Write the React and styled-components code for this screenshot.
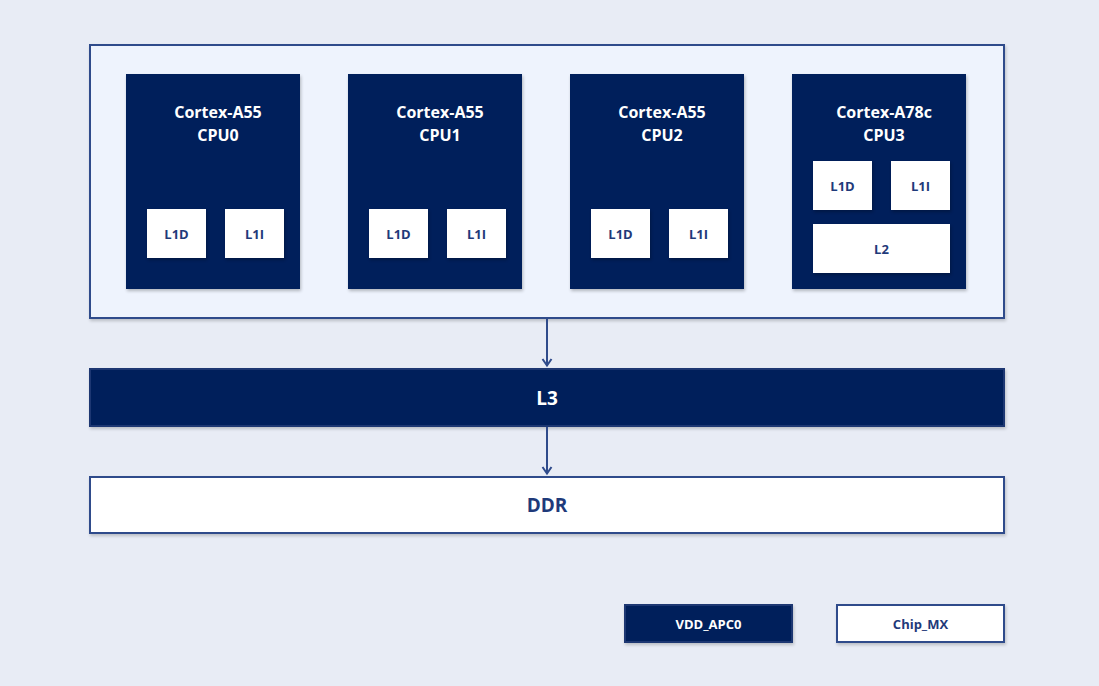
import styled, { createGlobalStyle } from "styled-components";

const GlobalStyle = createGlobalStyle`
  html, body {
    margin: 0;
    padding: 0;
    background: #e8ecf5;
  }
  body {
    font-family: "Open Sans", "Liberation Sans", sans-serif;
  }
`;

const Page = styled.div`
  width: 1099px;
  height: 686px;
  box-sizing: border-box;
  padding: 44px 94px 0 89px;
  display: flex;
  flex-direction: column;
`;

const Cluster = styled.div`
  height: 275px;
  box-sizing: border-box;
  border: 2px solid #2f4b8b;
  background: #eef3fd;
  box-shadow: 1px 2px 3px rgba(0, 0, 0, 0.2);
  padding: 28px 0 0 35px;
  display: flex;
  gap: 48px;
`;

const Cpu = styled.div`
  width: 174px;
  height: 215px;
  box-sizing: border-box;
  background: #001f5b;
  box-shadow: 1px 2px 3px rgba(0, 0, 0, 0.25);
  padding: 27px 16px ${(p) => p.$bottom}px 21px;
  display: flex;
  flex-direction: column;
`;

const CpuTitle = styled.div`
  color: #ffffff;
  font-weight: 700;
  font-size: 16px;
  line-height: 23px;
  text-align: center;
  margin-left: 5px;
`;

const Caches = styled.div`
  margin-top: auto;
  display: grid;
  grid-template-columns: 1fr 1fr;
  column-gap: 19px;
  row-gap: 14px;
`;

const Cache = styled.div`
  grid-column: ${(p) => (p.$wide ? "1 / span 2" : "auto")};
  height: 49px;
  background: #ffffff;
  box-shadow: 1px 2px 3px rgba(0, 0, 0, 0.25);
  display: flex;
  align-items: center;
  justify-content: center;
  color: #1f3a7a;
  font-weight: 700;
  font-size: 13px;
`;

const Connector = styled.div`
  height: 49px;
  display: flex;
  justify-content: center;
`;

const Bar = styled.div`
  height: ${(p) => p.$h}px;
  box-sizing: border-box;
  border: 2px solid ${(p) => (p.$dark ? "#1d3772" : "#2f4b8b")};
  background: ${(p) => (p.$dark ? "#001f5b" : "#ffffff")};
  color: ${(p) => (p.$dark ? "#ffffff" : "#1f3a7a")};
  box-shadow: 1px 2px 3px rgba(0, 0, 0, 0.2);
  display: flex;
  align-items: center;
  justify-content: center;
  font-weight: 700;
  font-size: 19px;
`;

const Legend = styled.div`
  margin-top: 70px;
  display: flex;
  justify-content: flex-end;
  gap: 43px;
`;

const Key = styled.div`
  width: 169px;
  height: 39px;
  box-sizing: border-box;
  border: 2px solid ${(p) => (p.$dark ? "#1d3772" : "#2f4b8b")};
  background: ${(p) => (p.$dark ? "#001f5b" : "#ffffff")};
  color: ${(p) => (p.$dark ? "#ffffff" : "#1f3a7a")};
  box-shadow: 1px 2px 3px rgba(0, 0, 0, 0.2);
  display: flex;
  align-items: center;
  justify-content: center;
  font-weight: 700;
  font-size: 13px;
`;

function Arrow() {
  return (
    <svg width="16" height="49" viewBox="0 0 16 49">
      <path d="M8 0 V47" stroke="#2f4b8b" strokeWidth="2" fill="none" />
      <path d="M3.5 40 L8 46.5 L12.5 40" stroke="#2f4b8b" strokeWidth="2" fill="none" />
    </svg>
  );
}

const cpus = [
  { core: "Cortex-A55", name: "CPU0" },
  { core: "Cortex-A55", name: "CPU1" },
  { core: "Cortex-A55", name: "CPU2" },
  { core: "Cortex-A78c", name: "CPU3", l2: true },
];

export default function App() {
  return (
    <>
      <GlobalStyle />
      <Page>
        <Cluster>
          {cpus.map((c) => (
            <Cpu key={c.name} $bottom={c.l2 ? 16 : 31}>
              <CpuTitle>
                {c.core}
                <br />
                {c.name}
              </CpuTitle>
              <Caches>
                <Cache>L1D</Cache>
                <Cache>L1I</Cache>
                {c.l2 && <Cache $wide>L2</Cache>}
              </Caches>
            </Cpu>
          ))}
        </Cluster>
        <Connector>
          <Arrow />
        </Connector>
        <Bar $dark $h={59}>L3</Bar>
        <Connector>
          <Arrow />
        </Connector>
        <Bar $h={58}>DDR</Bar>
        <Legend>
          <Key $dark>VDD_APC0</Key>
          <Key>Chip_MX</Key>
        </Legend>
      </Page>
    </>
  );
}
